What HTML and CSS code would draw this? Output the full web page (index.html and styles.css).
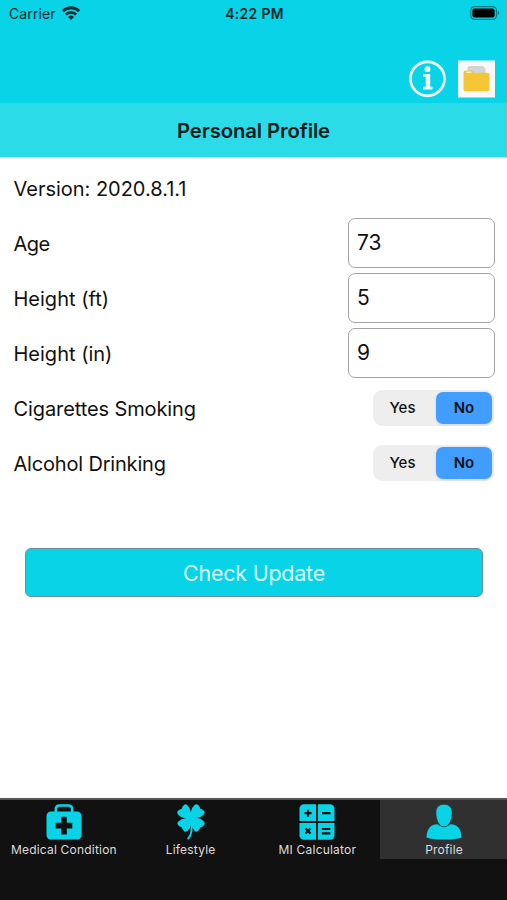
FILE: index.html
```html
<!DOCTYPE html>
<html lang="en">
<head>
<meta charset="utf-8">
<meta name="viewport" content="width=device-width, initial-scale=1">
<title>Personal Profile</title>
<link rel="stylesheet" href="styles.css">
</head>
<body>
<div class="app">
  <header class="top">
    <div class="status">
      <div class="carrier"><span>Carrier</span>
        <svg class="wifi" width="18" height="14" viewBox="0 0 18 14"><g fill="none" stroke="#032b30" stroke-width="2.8"><path d="M.9 5.1a11.5 11.5 0 0 1 16.2 0"/><path d="M3.8 8.6a7.4 7.4 0 0 1 10.4 0"/></g><path d="M6 10.9a4.3 4.3 0 0 1 6 0L9 13.9z" fill="#032b30"/></svg>
      </div>
      <div class="time">4:22 PM</div>
      <svg class="battery" width="30" height="14" viewBox="0 0 30 14"><rect x=".8" y=".7" width="25.6" height="12.6" rx="3.6" fill="none" stroke="#087b84" stroke-width="1.2"/><rect x="2.4" y="2.4" width="22.2" height="9.2" rx="2" fill="#000"/><path d="M27.7 4.8q3 2.2 0 4.4z" fill="#087b84"/></svg>
    </div>
    <div class="actions">
      <svg width="37" height="37" viewBox="0 0 37 37"><circle cx="18.5" cy="18.8" r="17" fill="none" stroke="#f0ffff" stroke-width="2.7"/><circle cx="18.5" cy="9.2" r="2.9" fill="#f0ffff"/><path d="M14 14h7.2v12.7h2.3v2.8H14v-2.8h2.7v-9.9H14z" fill="#f0ffff"/></svg>
      <svg width="37" height="37" viewBox="0 0 37 37"><path d="M0 .5h37v37H0z" fill="#f8f8f6"/><path d="M11 6h14l2.5 2.5V16H9.5V7.5z" fill="#d2d5d5"/><path d="M5.5 12.5q0-2 2-2h5.7q1.3 0 2 1.2l.6 1h13.7q2 0 2 2v14.6q0 2-2 2h-22q-2 0-2-2z" fill="#f4c534"/><path d="M8 12.3h5.3" stroke="#fff3c9" stroke-width="1.5"/></svg>
    </div>
  </header>
  <h1 class="title"><span>Personal Profile</span></h1>
  <main class="form">
    <div class="row"><span class="version">Version: 2020.8.1.1</span></div>
    <div class="row"><label class="age" for="age">Age</label><input id="age" value="73"></div>
    <div class="row"><label for="feet">Height (ft)</label><input id="feet" value="5"></div>
    <div class="row"><label for="inches">Height (in)</label><input id="inches" value="9"></div>
    <div class="row"><span class="smoking">Cigarettes Smoking</span><div class="segment"><span>Yes</span><span class="selected">No</span></div></div>
    <div class="row"><span class="drinking">Alcohol Drinking</span><div class="segment"><span>Yes</span><span class="selected">No</span></div></div>
    <button class="update"><span>Check Update</span></button>
  </main>
  <nav class="tabs">
    <div class="tab">
      <svg width="36" height="36" viewBox="0 0 36 36"><path d="M9.8 9V5.5q0-4 4-4h8.4q4 0 4 4V9" fill="none" stroke="#09d3e6" stroke-width="2.7"/><rect x=".5" y="7.5" width="35" height="28" rx="4.5" fill="#09d3e6"/><path d="M15.2 12.8h5.6v6h5.5v5.6h-5.5v6h-5.6v-6H9.7v-5.6h5.5z" fill="#111"/></svg>
      <span>Medical Condition</span>
    </div>
    <div class="tab">
      <svg width="36" height="36" viewBox="0 0 36 36"><defs><path id="leaf" d="M19 15L17.8 8Q17.2 3.8 14.2 1Q12.6-.3 11 1Q9 2.6 8.8 4.8Q6.5 5 4.8 7.1Q3.6 8.8 5 10.4Q7.5 13.3 11.3 14z"/></defs><g fill="#09d3e6"><use href="#leaf"/><use href="#leaf" transform="rotate(90 18 14)"/><use href="#leaf" transform="rotate(180 18 14)"/><use href="#leaf" transform="rotate(270 18 14)"/><path d="M14 10h8v8h-8z"/></g><path d="M18 17Q20.3 28.5 15.3 34.5" fill="none" stroke="#09d3e6" stroke-width="2" stroke-linecap="round"/></svg>
      <span>Lifestyle</span>
    </div>
    <div class="tab">
      <svg width="36" height="36" viewBox="0 0 36 36"><rect x=".5" y=".3" width="35" height="35.4" rx="4.5" fill="#09d3e6"/><g stroke="#111" fill="none"><path d="M18 0v36M0 18h36" stroke-width="1.8"/><path d="M5.5 9.2h7M9 5.7v7M23 9.2h8.5M22.8 25h8.5M22.8 29.4h8.5M6.5 24.5l5 5m0-5l-5 5" stroke-width="2.2"/></g></svg>
      <span>MI Calculator</span>
    </div>
    <div class="tab active">
      <svg width="36" height="36" viewBox="0 0 36 36"><path d="M.5 33.5C.8 24 5 20.5 11.5 20.2Q18 26 24.5 20.2C31 20.5 35.2 24 35.5 33.5Q30 35.5 18 35.5T.5 33.5z" fill="#09d3e6"/><path d="M18 .3C12.8.3 9.8 3.5 9.9 9C9.9 15 12.6 22.8 18 22.8S26.1 15 26.1 9C26.2 3.5 23.2.3 18 .3z" fill="#09d3e6" stroke="#303030" stroke-width=".7"/></svg>
      <span>Profile</span>
    </div>
  </nav>
</div>
</body>
</html>
```

FILE: styles.css
```css
* { box-sizing: border-box; }
body { margin: 0; background: #fff; color: #111; font-family: Inter, "Liberation Sans", sans-serif; }
svg { display: block; flex: none; }
.app { height: 900px; display: flex; flex-direction: column; overflow: hidden; }
.top { height: 103px; flex: none; background: #09d3e6; }
.status { height: 27px; display: grid; grid-template-columns: 1fr auto 1fr; align-items: center; padding: 0 7px 0 9px; color: #03262b; }
.carrier { display: flex; align-items: center; gap: 6px; font-size: 14px; letter-spacing: .1px; }
.wifi { margin-top: -1px; }
.time { font-size: 13.8px; font-weight: 600; letter-spacing: .4px; }
.battery { justify-self: end; margin-top: -1px; }
.actions { display: flex; justify-content: flex-end; gap: 12px; padding: 33px 12px 0 0; }
.actions svg { overflow: visible; }
.title { height: 55px; flex: none; margin: 0; padding-top: 1px; background: #2cdbe8; display: flex; align-items: center; justify-content: center; font-size: 20.3px; font-weight: 600; letter-spacing: -.1px; color: #06191b; border-bottom: 1px solid #b8f3f7; }
.form { flex: 1; padding: 2px 12px 0 13.5px; font-size: 20px; letter-spacing: -.1px; }
.row { height: 55px; display: flex; align-items: center; justify-content: space-between; }
.row > span, .row > label { padding-top: 2px; }
.row label { letter-spacing: 0; }
.row .age { letter-spacing: -.5px; }
.row .drinking { letter-spacing: -.18px; }
.row .version { letter-spacing: -.02px; }
.row input { width: 147px; height: 50px; border: 1.5px solid #a3a3a3; border-radius: 7px; padding: 0 8px 1px; background: #fff; color: #111; font: inherit; font-size: 21px; outline: 0; }
.segment { width: 121px; height: 36px; margin-right: 1px; padding: 2px; border-radius: 9px; background: #eee; display: grid; grid-template-columns: 61px 56px; align-items: stretch; font-size: 15px; font-weight: 500; letter-spacing: 0; }
.segment span { display: flex; align-items: center; justify-content: center; padding-right: 6px; }
.segment .selected { background: #419dff; border-radius: 7px; padding: 0; font-weight: 600; box-shadow: 0 1px 3px rgba(0, 0, 0, .12); }
.update { display: flex; width: 458px; height: 49px; margin: 58px 0 0 11.5px; align-items: center; justify-content: center; border: 1.5px solid #6c8e92; border-radius: 6px; background: #09d3e6; color: #d9fdff; font: inherit; font-size: 21.5px; letter-spacing: -.25px; }
.tabs { height: 102px; flex: none; background: #111; border-top: 2px solid #555; display: grid; grid-template-columns: repeat(4, 1fr); align-items: start; }
.tab { height: 59px; padding-top: 4px; display: flex; flex-direction: column; align-items: center; color: #ddd; font-size: 12px; white-space: nowrap; letter-spacing: .2px; }
.tab svg { margin-left: 1px; }
.tab span { line-height: 14px; margin-top: 3px; margin-left: 1px; }
.tab.active { background: #303030; }
```
